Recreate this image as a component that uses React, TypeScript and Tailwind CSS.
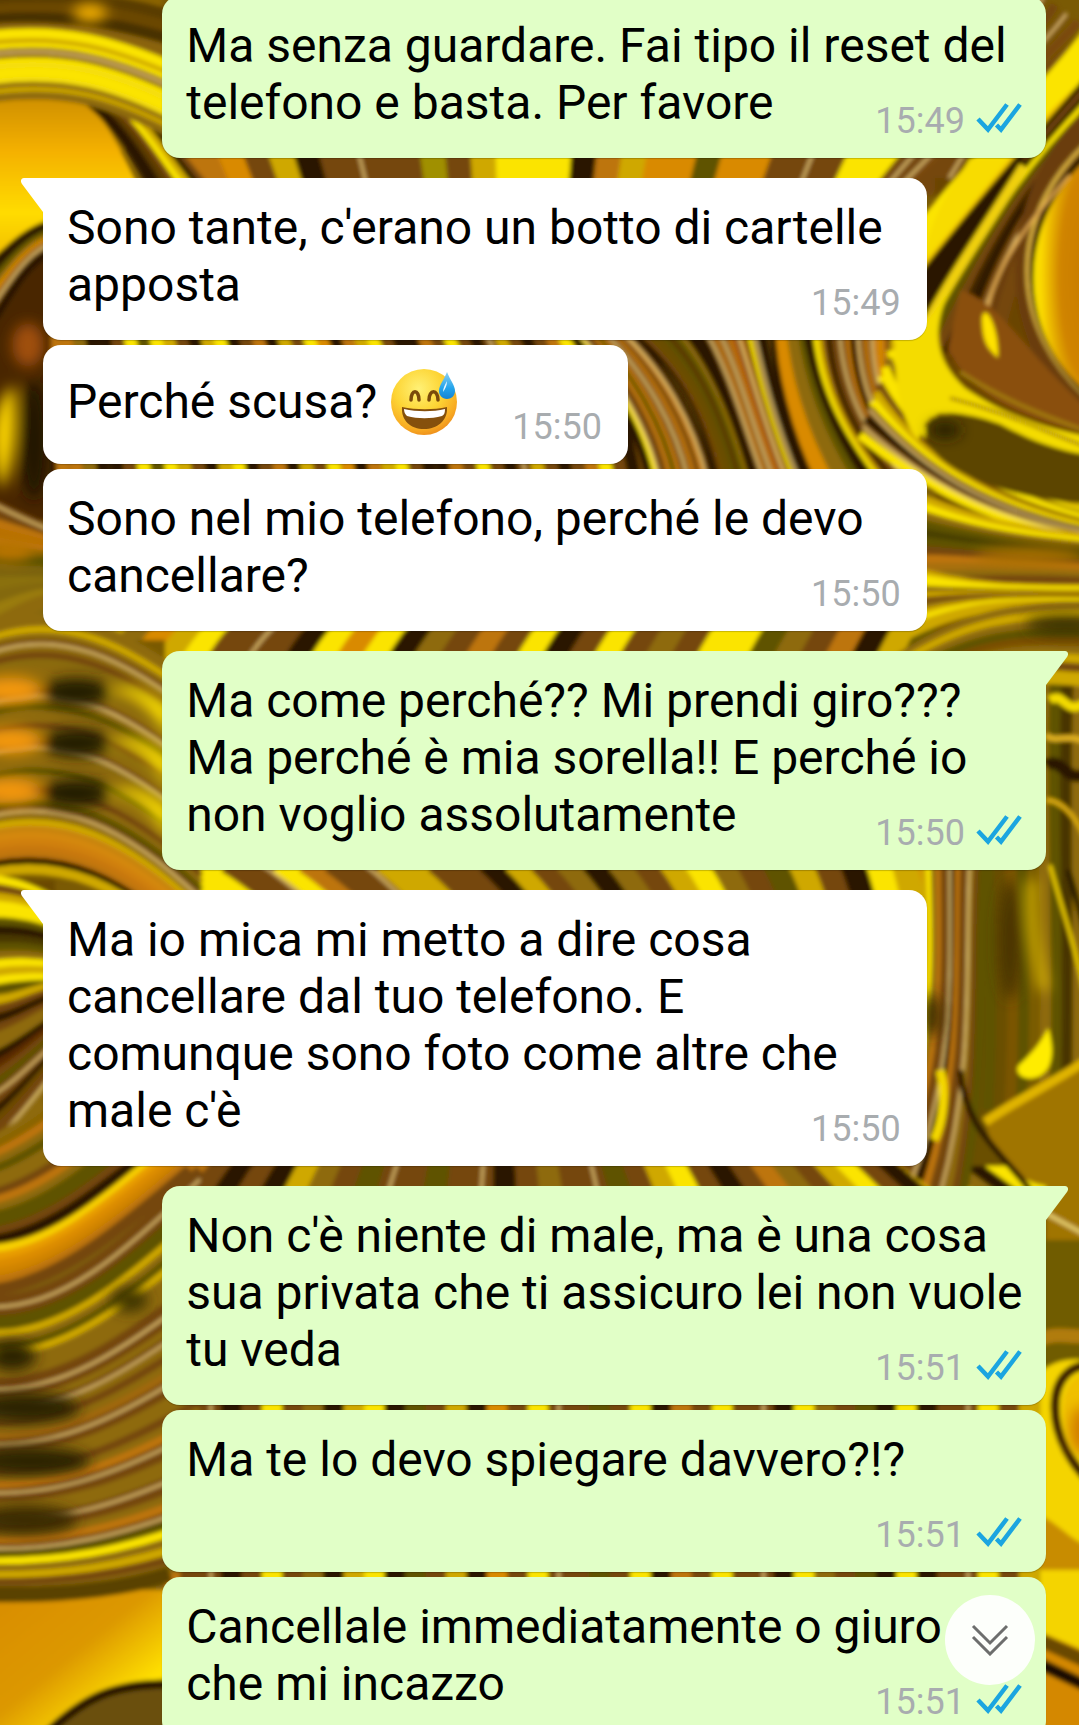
import { useId } from 'react';
import clsx from 'clsx';

type Message = {
  text: string;
  time: string;
  emoji?: boolean;
  timeBelow?: boolean;
};

type Group = {
  from: 'me' | 'them';
  tail: boolean;
  messages: Message[];
};

const groups: Group[] = [
  {
    from: 'me',
    tail: false,
    messages: [{ text: 'Ma senza guardare. Fai tipo il reset del telefono e basta. Per favore', time: '15:49' }],
  },
  {
    from: 'them',
    tail: true,
    messages: [
      { text: "Sono tante, c'erano un botto di cartelle apposta", time: '15:49' },
      { text: 'Perché scusa?', time: '15:50', emoji: true },
      { text: 'Sono nel mio telefono, perché le devo cancellare?', time: '15:50' },
    ],
  },
  {
    from: 'me',
    tail: true,
    messages: [
      { text: 'Ma come perché?? Mi prendi giro??? Ma perché è mia sorella!! E perché io non voglio assolutamente', time: '15:50' },
    ],
  },
  {
    from: 'them',
    tail: true,
    messages: [
      {
        text: "Ma io mica mi metto a dire cosa cancellare dal tuo telefono. E comunque sono foto come altre che male c'è",
        time: '15:50',
      },
    ],
  },
  {
    from: 'me',
    tail: true,
    messages: [
      { text: "Non c'è niente di male, ma è una cosa sua privata che ti assicuro lei non vuole tu veda", time: '15:51' },
      { text: 'Ma te lo devo spiegare davvero?!?', time: '15:51', timeBelow: true },
      { text: 'Cancellale immediatamente o giuro che mi incazzo', time: '15:51' },
    ],
  },
];

/* ---------- Wallpaper ---------- */

// A strand set is a row of cubic curves blended from curve a to curve b
type Strands = { a: number[]; b: number[]; w: number; colors: string[] };

const Y = '#fbe400';
const G = '#cfa800';
const P = '#ecd080';
const A = '#d98a00';
const O = '#bd7408';
const B = '#744608';
const N = '#8e6a08';
const L = '#5e5200';
const D = '#2a1800';

const backdrop: Strands[] = [
  // between the first and second bubble
  {
    a: [150, 140, 158, 155, 166, 170, 176, 190],
    b: [1050, 140, 1038, 155, 1028, 170, 1014, 190],
    w: 28,
    colors: [Y, B, O, A, B, G, D, B, P, B, B, '#a09000', B, G, Y, Y, Y, D, O, G, A, A, L, A, A, B, P, B, Y, Y, Y, B, P, D, Y, D],
  },
  // behind the short bubble gaps
  {
    a: [40, 335, 44, 350, 46, 440, 50, 480],
    b: [640, 335, 660, 370, 680, 430, 690, 480],
    w: 12,
    colors: [D, O, O, N, D, D, B, Y, L, Y, G, B, D, G, Y, D, B, O, D, G, B, Y, A, D, O, G, Y, B, D, D, O, B, Y, B, D, P, G, B, D, B, O, Y, B, D, B, O, B, D],
  },
  {
    a: [60, 615, 40, 630, 20, 650, 10, 670],
    b: [940, 615, 930, 630, 920, 650, 910, 670],
    w: 26,
    colors: [N, N, '#a07808', G, N, A, G, Y, B, P, B, D, Y, A, Y, D, N, B, O, B, Y, D, B, Y, B, N, B, Y, Y, L, N, B, O, D, G, L],
  },
  {
    a: [150, 860, 170, 870, 190, 885, 210, 900],
    b: [1060, 860, 1060, 870, 1060, 885, 1060, 900],
    w: 26,
    colors: [Y, Y, Y, B, P, Y, O, B, P, G, G, B, B, D, G, B, N, D, N, B, G, Y, N, B, L, G, B, D, Y, G, A, G, Y, L, N, L],
  },
  {
    a: [190, 1155, 175, 1170, 165, 1180, 150, 1200],
    b: [1010, 1155, 1030, 1170, 1050, 1180, 1070, 1200],
    w: 22,
    colors: [O, O, B, D, B, D, G, N, B, L, P, B, L, B, P, D, B, N, B, P, L, B, G, Y, B, D, B, O, N, B, G, Y, B, D, G, Y, N, D, Y, Y],
  },
  // thin gaps in the last group
  {
    a: [170, 1390, 170, 1460, 170, 1520, 170, 1600],
    b: [1050, 1390, 1050, 1460, 1050, 1520, 1050, 1600],
    w: 20,
    colors: [O, B, P, D, B, Y, B, N, D, G, Y, D, L, B, G, D, A, B, Y, P, B, L, B, Y, D, O, B, Y, B, P, D, Y, N, B, L, D, Y, D, B, P, Y, B, G, L],
  },
];

const strands: Strands[] = [
  // top left arcs
  { a: [-5, 0, 60, -4, 120, -4, 200, 26], b: [-5, 30, 60, 26, 120, 34, 200, 62], w: 12, colors: ['#5a3c00', '#6a4600', '#4a3000', '#8a6408'] },
  { a: [75, 92, 110, 110, 140, 160, 160, 200], b: [140, 96, 170, 120, 190, 160, 230, 200], w: 9, colors: [D, D, '#5a3a00', B, Y, G, D, B, O] },
  {
    a: [-5, 34, 60, 28, 110, 36, 200, 78],
    b: [-5, 98, 60, 90, 110, 98, 200, 150],
    w: 7,
    colors: [Y, Y, G, Y, P, N, Y, '#f4dc10', Y, Y, '#f4dc10', N, G, N],
  },
  { a: [-5, 262, 12, 246, 28, 230, 50, 224], b: [-5, 318, 12, 290, 28, 262, 50, 252], w: 7, colors: [D, D, L, N, A, P, B, D] },
  { a: [-5, 505, 15, 515, 30, 522, 50, 530], b: [-5, 560, 15, 560, 30, 560, 50, 562], w: 9, colors: [P, B, O, '#b87000', O, '#8a6400', L] },
  { a: [-5, 570, 20, 574, 35, 576, 60, 580], b: [-5, 625, 20, 612, 35, 602, 60, 600], w: 14, colors: ['#7c6408', '#8a7008', '#84690a', '#9a7c08', N] },
  {
    a: [-5, 626, 60, 604, 120, 628, 200, 690],
    b: [-5, 872, 60, 860, 120, 880, 200, 960],
    w: 9,
    colors: [N, N, G, N, P, N, B, '#8a6a08', N, N, '#8a6a08', N, P, N, L, N, N, B, '#8a6a08', N, P, '#8a6a08', N, N, L, N, N, B, N, L, P, N, G, '#c88410', '#d48808', '#d08008', '#c87808', O, D, G],
  },
  { a: [-5, 880, 20, 884, 35, 890, 60, 905], b: [-5, 990, 20, 985, 35, 985, 60, 985], w: 9, colors: [Y, B, G, Y, Y, L, D, '#4a3800', L, N, Y, G, Y, L] },
  {
    a: [-5, 1000, 15, 1000, 30, 990, 60, 985],
    b: [-5, 1150, 15, 1130, 30, 1110, 60, 1070],
    w: 9,
    colors: [G, B, D, B, N, N, D, '#5a2c00', B, L, P, B, D, '#6a4a00', B, P, N],
  },
  {
    a: [-5, 1140, 30, 1120, 60, 1100, 120, 1040],
    b: [-5, 1240, 60, 1230, 110, 1180, 190, 1120],
    w: 10,
    colors: [N, '#8a6400', O, N, L, N, N, B, O, N, L, L, B, D],
  },
  {
    a: [-5, 1250, 60, 1245, 110, 1195, 190, 1130],
    b: [-5, 1290, 60, 1280, 120, 1230, 190, 1170],
    w: 11,
    colors: ['#f8d000', '#e89c00', '#dc8c00', '#d08400', O, B],
  },
  {
    a: [-5, 1300, 60, 1300, 120, 1250, 200, 1170],
    b: [-5, 1590, 60, 1590, 120, 1585, 200, 1560],
    w: 9,
    colors: [B, P, B, L, L, G, N, L, G, N, N, N, B, P, B, N, P, N, B, N, '#a06808', P, B, N, N, B, N, O, P, B, N, N, P, B, N, O, P, L, Y, N, G, B, N],
  },
  // diagonal folds on the right of the short bubble
  {
    a: [612, 320, 670, 365, 700, 430, 712, 480],
    b: [560, 320, 610, 380, 640, 430, 650, 480],
    w: 7,
    colors: [D, P, O, B, O, P, B, O, L, O, B, P, Y, D],
  },
  { a: [628, 325, 690, 370, 710, 430, 722, 480], b: [690, 325, 725, 370, 745, 430, 760, 480], w: 10, colors: [D, B, '#6a5000', '#6a4c00', L, '#5a3400', L, N, D, D] },
  {
    a: [702, 325, 730, 370, 745, 430, 764, 480],
    b: [762, 325, 768, 370, 780, 420, 806, 480],
    w: 6,
    colors: [P, B, O, P, B, O, '#b05a10', P, O, B, Y, P, D, D],
  },
  { a: [776, 325, 776, 370, 790, 430, 812, 480], b: [808, 325, 815, 370, 830, 420, 870, 480], w: 11, colors: [D, A, A, N, N, L, D] },
  {
    a: [816, 325, 820, 390, 850, 440, 890, 490],
    b: [895, 325, 893, 390, 905, 430, 960, 470],
    w: 7,
    colors: [Y, G, B, D, B, P, B, O, D, P, B, O, P, O, A, O, B, G],
  },
  // sweep below the cavity
  {
    a: [900, 325, 905, 410, 960, 470, 1090, 508],
    b: [860, 435, 930, 490, 990, 520, 1090, 540],
    w: 8,
    colors: [Y, Y, G, Y, N, Y, Y, B, G, Y, P, D, P, Y],
  },
  {
    a: [900, 490, 960, 520, 1010, 532, 1090, 540],
    b: [900, 590, 970, 580, 1020, 580, 1090, 584],
    w: 12,
    colors: [G, Y, N, L, '#4a4000', L, B, O, '#a87008', N, B],
  },
  {
    a: [900, 566, 970, 588, 1020, 588, 1090, 588],
    b: [900, 640, 970, 602, 1020, 604, 1090, 606],
    w: 6,
    colors: [G, Y, Y, N, G, B, N, G, Y, G, G],
  },
  // right edge beside the green bubble, down to the lower half
  {
    a: [985, 640, 985, 800, 1000, 960, 990, 1110],
    b: [1096, 640, 1085, 800, 1096, 960, 1090, 1110],
    w: 15,
    colors: [L, '#6a5000', '#7a5400', L, '#7a5c00', N, L, '#4a3400', N, B],
  },
  {
    a: [925, 850, 930, 960, 935, 1060, 880, 1150],
    b: [985, 850, 975, 960, 990, 1060, 960, 1210],
    w: 8,
    colors: [G, Y, N, O, B, P, D, O, B, P, N, B, L],
  },
  { a: [900, 660, 960, 620, 1010, 608, 1090, 608], b: [900, 720, 980, 668, 1030, 675, 1090, 680], w: 13, colors: [N, G, N, L, '#7a5000', N, G, B, G] },
  // upper right folds
  { a: [1020, -20, 1000, 30, 960, 70, 880, 180], b: [1090, 30, 1060, 60, 1020, 90, 880, 220], w: 8, colors: [Y, B, P, B, P, '#7a4a10', B] },
  { a: [1100, 20, 1070, 70, 1020, 110, 890, 270], b: [1100, 80, 1070, 100, 1040, 130, 890, 310], w: 17, colors: [Y, Y, Y, '#f4c400'] },
  {
    a: [1100, 70, 1050, 130, 1000, 180, 900, 310],
    b: [1100, 160, 1050, 190, 1000, 270, 990, 390],
    w: 13,
    colors: [D, B, D, Y, L, B, '#3a2200', D, P, B, '#6a3c08', B],
  },
];

const mix = (a: number[], b: number[], t: number) => a.map((v, i) => Math.round((v + (b[i] - v) * t) * 10) / 10);

function StrandSet({ a, b, w, colors }: Strands) {
  const lines = colors.map((color, i) => {
    const [x0, y0, ...rest] = mix(a, b, i / (colors.length - 1));
    return { color, d: `M${x0} ${y0}C${rest.join(' ')}` };
  });
  return (
    <g fill="none">
      {lines.map(({ color, d }, i) => (
        <path key={i} d={d} stroke={color === P ? B : color} strokeWidth={w + 1} />
      ))}
      {lines
        .filter(({ color }) => color === P)
        .map(({ d }, i) => (
          <path key={i} d={d} stroke={P} strokeWidth="3" strokeOpacity="0.8" />
        ))}
    </g>
  );
}

function Wallpaper() {
  return (
    <svg
      aria-hidden="true"
      viewBox="0 0 1079 1725"
      preserveAspectRatio="xMidYMin slice"
      className="absolute inset-0 h-full w-full"
    >
      <defs>
        <filter id="soft" x="-5%" y="-5%" width="110%" height="110%">
          <feGaussianBlur stdDeviation="2" />
        </filter>
        <filter id="glow" x="-50%" y="-50%" width="200%" height="200%">
          <feGaussianBlur stdDeviation="7" />
        </filter>
        <linearGradient id="amber" x1="0" y1="0" x2="0" y2="1">
          <stop offset="0" stopColor="#c88a00" />
          <stop offset="0.35" stopColor="#f4b000" />
          <stop offset="0.7" stopColor="#ffdc00" />
          <stop offset="1" stopColor="#f0b800" />
        </linearGradient>
        <radialGradient id="pool" cx="0.8" cy="0.5" r="0.8">
          <stop offset="0" stopColor="#c87c00" />
          <stop offset="0.5" stopColor="#d08400" />
          <stop offset="0.85" stopColor="#fbd800" />
          <stop offset="1" stopColor="#f8e400" />
        </radialGradient>
        <linearGradient id="floor" x1="0" y1="0" x2="1" y2="1">
          <stop offset="0" stopColor="#d88c00" />
          <stop offset="0.45" stopColor="#dc9800" />
          <stop offset="0.75" stopColor="#ffe000" />
          <stop offset="1" stopColor="#e0a400" />
        </linearGradient>
      </defs>

      <rect width="1079" height="1725" fill="#7a5a04" />
      <g filter="url(#soft)">
        {backdrop.map((s, i) => (
          <StrandSet key={i} {...s} />
        ))}
        <rect x="-15" y="-15" width="177" height="165" fill="#8a6400" />
        <rect x="-15" y="260" width="66" height="260" fill="#4a2800" />
        <rect x="-15" y="560" width="70" height="80" fill="#7c6408" />
        <rect x="-15" y="640" width="180" height="240" fill="#7a5a06" />
        <rect x="-15" y="880" width="70" height="290" fill="#6a4a04" />
        <path d="M-15 1140H60V1170H165V1620H-15Z" fill="#80600a" />
        <path d="M927 890H1095V1400H1046V1166H927Z" fill="#6a5004" />
        <path d="M935 178H1095V900H1040V631H935Z" fill="#6a4404" />
        <path d="M-15 90L72 88C105 110 128 165 150 210L50 224C25 234 10 250 -15 266Z" fill="url(#amber)" />
        {strands.map((s, i) => (
          <StrandSet key={i} {...s} />
        ))}

        {/* rings round the amber pool */}
        <g fill="none">
          <path d="M1100 120C1020 190 1000 330 1100 410" stroke="#6a3c08" strokeWidth="34" />
          <path d="M1100 132C1006 205 1000 330 1100 408" stroke="#d8b040" strokeWidth="4" />
          <path d="M1100 145C1016 215 1010 330 1100 402" stroke="#241500" strokeWidth="10" />
          <path d="M1070 175C1025 225 975 290 988 345" stroke="#e0a850" strokeWidth="3" />
        </g>
        <path d="M1100 148C1010 215 1012 345 1100 402Z" fill="url(#pool)" />
        <path d="M925 262L1010 158H970C950 190 928 220 925 262Z" fill="#f8dc00" />
        <path d="M920 296C960 240 990 200 1022 158" fill="none" stroke="#2a1800" strokeWidth="12" />
        <path d="M915 350C935 300 985 230 1024 166" fill="none" stroke="#f0d010" strokeWidth="10" />

        {/* yellow junction and cavity */}
        <path d="M895 335C920 340 935 310 952 285C930 330 935 360 965 388C1000 412 1040 428 1095 438V462C1030 455 985 425 945 414C925 412 925 430 918 440C900 420 893 380 895 335Z" fill="#f4dc00" />
        <path d="M926 425C935 408 965 412 1000 424C1030 440 1060 452 1095 456V505C1020 500 945 478 926 440Z" fill="#5c4400" />
        <path d="M960 290C1000 300 1030 360 1095 415V435C1030 420 975 400 948 350Z" fill="#8a5008" />
        <path d="M982 318C985 300 1000 330 998 358C990 350 982 345 982 318Z" fill="#ffe200" />
        <path d="M960 372C1000 398 1040 415 1095 434M950 398C1005 412 1040 430 1095 450" fill="none" stroke="#a88410" strokeWidth="3" />

        {/* glints beside the green bubble */}
        <g fill="none">
          <path d="M1050 700C1066 690 1064 720 1090 700" stroke="#f4dc00" strokeWidth="9" />
          <path d="M1046 735C1056 745 1070 730 1090 745" stroke="#e0b020" strokeWidth="6" />
          <path d="M1046 765C1062 755 1070 790 1090 770" stroke="#2a1800" strokeWidth="12" />
          <path d="M1046 800C1060 800 1078 815 1090 850" stroke="#d8a810" strokeWidth="5" />
          <path d="M1050 865C1062 910 1074 940 1084 990" stroke="#e8c800" strokeWidth="4" />
          <path d="M1068 870C1080 910 1086 930 1090 960" stroke="#2a1c00" strokeWidth="6" />
        </g>

        {/* lower right shapes */}
        <path d="M1048 1028C1054 1045 1055 1068 1040 1076C1028 1082 1014 1076 1018 1066C1028 1056 1038 1048 1048 1028Z" fill="#ffec00" />
        <path d="M985 1118L1095 1055V1300H1046V1186C1010 1180 990 1150 985 1118Z" fill="#a07404" />
        <path d="M985 1122C1020 1098 1050 1085 1095 1055" fill="none" stroke="#e0b400" strokeWidth="9" />
        <path d="M960 1070C965 1130 1000 1150 1030 1190" fill="none" stroke="#2a1600" strokeWidth="6" />
        <path d="M934 1140C944 1120 946 1090 940 1070" fill="none" stroke="#f4d800" strokeWidth="9" />
        <path d="M1040 1210L1095 1240" stroke="#e8d070" strokeWidth="4" />
        <rect x="1040" y="1240" width="55" height="140" fill="#705c04" />
        <path d="M1040 1340C1055 1330 1080 1340 1095 1335" fill="none" stroke="#b07c08" strokeWidth="14" />
        <path d="M1040 1372C1060 1356 1080 1358 1095 1362V1740H1040Z" fill="#f4d400" />
        <path d="M1100 1366C1040 1355 1040 1445 1100 1490" fill="none" stroke="#3a1c00" strokeWidth="9" />
        <path d="M1100 1376C1052 1362 1050 1438 1100 1478Z" fill="#f0c000" />
        <path d="M1040 1515C1060 1525 1070 1540 1095 1550V1570H1040Z" fill="#c88c00" />
        <path d="M1040 1632L1095 1655V1740H1040Z" fill="#d48800" />
        <path d="M1040 1640L1095 1665" stroke="#6a4a00" strokeWidth="14" />
        <path d="M1040 1664L1095 1690" stroke="#1c0e00" strokeWidth="12" />

        <path d="M-15 1590H170V1740H-15Z" fill="url(#floor)" />
        <path d="M40 1740C80 1700 110 1685 170 1684V1740Z" fill="#6a5008" />
        <path d="M40 1740C85 1695 115 1684 170 1684" fill="none" stroke="#2a1800" strokeWidth="9" />
        <path d="M-15 1594C60 1596 120 1590 170 1574" fill="none" stroke="#5a4200" strokeWidth="16" />
      </g>

      <g filter="url(#glow)">
        <ellipse cx="90" cy="13" rx="17" ry="9" fill="#f8b400" />
        <ellipse cx="28" cy="345" rx="16" ry="22" fill="#a05008" />
        <path d="M14 385C-6 400 -14 440 2 490C16 460 16 420 14 385Z" fill="#ffd800" />
        <ellipse cx="34" cy="440" rx="14" ry="60" fill="#241400" />
        <ellipse cx="10" cy="550" rx="24" ry="12" fill="#b87400" />
        {[690, 741, 791].map((y) => (
          <g key={y}>
            <ellipse cx="10" cy={y} rx="32" ry="13" fill="#f49808" />
            <ellipse cx="76" cy={y + 2} rx="34" ry="14" fill="#241c00" />
            <path d={`M108 ${y}C135 ${y + 4} 150 ${y + 16} 170 ${y + 48}V${y + 18}C150 ${y + 2} 130 ${y - 8} 108 ${y}Z`} fill="#ffe400" />
          </g>
        ))}
        <ellipse cx="12" cy="1356" rx="24" ry="15" fill="#2c2400" />
        <ellipse cx="25" cy="1408" rx="54" ry="15" fill="#2c2200" />
        <ellipse cx="30" cy="1461" rx="60" ry="14" fill="#2c2200" />
        <ellipse cx="25" cy="1520" rx="52" ry="15" fill="#3a2c00" />
        <ellipse cx="130" cy="1300" rx="18" ry="12" fill="#3a3200" />
        <ellipse cx="945" cy="430" rx="16" ry="8" fill="#241a00" />
        <ellipse cx="1030" cy="556" rx="55" ry="9" fill="#a87000" />
        <ellipse cx="1065" cy="625" rx="40" ry="10" fill="#3a3000" />
        <ellipse cx="932" cy="1015" rx="9" ry="22" fill="#3a2c00" />
        <ellipse cx="1082" cy="1430" rx="12" ry="24" fill="#d07c00" />
        <ellipse cx="1010" cy="940" rx="12" ry="60" fill="#4a3600" />
        <path d="M1032 880C1030 930 1038 960 1044 990" stroke="#e8c800" strokeWidth="8" fill="none" />
      </g>
    </svg>
  );
}

/* ---------- Icons ---------- */

function ReadTicks() {
  return (
    <svg viewBox="0 0 46 30" className="h-[30px] w-[46px]" fill="none" stroke="#1ba5e0" strokeWidth="4.5" role="img" aria-label="Letto">
      <path d="M2 16L12 26.5L31 1.5" />
      <path d="M20.5 22L25 26.5L44 1.5" />
    </svg>
  );
}

function SweatSmile() {
  const id = useId();
  return (
    <svg viewBox="0 2 68 68" className="inline-block h-[68px] w-[68px]" role="img" aria-label="😅">
      <defs>
        <radialGradient id={`${id}f`} cx="0.42" cy="0.3" r="0.72">
          <stop offset="0" stopColor="#fff176" />
          <stop offset="0.5" stopColor="#fdd535" />
          <stop offset="0.85" stopColor="#f8ab22" />
          <stop offset="1" stopColor="#ee8f1c" />
        </radialGradient>
        <linearGradient id={`${id}d`} x1="0" y1="0" x2="0" y2="1">
          <stop offset="0" stopColor="#8fd0f0" />
          <stop offset="0.6" stopColor="#22a4ec" />
          <stop offset="1" stopColor="#1583d4" />
        </linearGradient>
      </defs>
      <circle cx="33" cy="36" r="33" fill={`url(#${id}f)`} />
      <path d="M20 34C20 23 28 23 28 34M38 34C38 23 47 23 47 34" fill="none" stroke="#7a4a0a" strokeWidth="3.5" strokeLinecap="round" />
      <path d="M11 41C25 44 43 44 56 41C57 55 46 63 33 63C20 63 10 55 11 41Z" fill="#85500c" />
      <path d="M13 43C26 46 42 46 54 43C54 47 53 49 51 50C40 53 27 53 16 50C14 48 13 46 13 43Z" fill="#fff" />
      <path d="M56 6C59 14 64 19 64 25C64 30 60 33 56 33C51 33 48 29 48 25C48 19 53 14 56 6Z" fill={`url(#${id}d)`} />
      <path d="M56 15C54 19 52 22 52 26C54 23 56 20 56 15Z" fill="#e4f6ff" />
    </svg>
  );
}

function Tail({ mine }: { mine: boolean }) {
  return (
    <svg
      aria-hidden="true"
      viewBox="0 0 22 34"
      className={clsx('absolute top-0 h-[34px] w-[22px]', mine ? 'left-full -scale-x-100' : 'right-full')}
    >
      <path d="M22 0H3C0 0 -1 3 1 6L22 34Z" fill={mine ? '#e1ffc7' : '#ffffff'} />
    </svg>
  );
}

/* ---------- Chat ---------- */

function Bubble({ message, mine, tail }: { message: Message; mine: boolean; tail: boolean }) {
  const { text, time, emoji, timeBelow } = message;
  return (
    <li
      className={clsx(
        'relative flex flex-col rounded-[18px] pt-[21px] pr-[22px] pb-[19px] pl-6 shadow-[0_1px_1px_rgba(0,0,0,0.2)]',
        mine ? 'mr-[33px] self-end bg-[#e1ffc7]' : 'ml-[43px] self-start bg-white',
        emoji ? 'min-w-[585px]' : 'w-[calc(82%-1px)]',
        tail && (mine ? 'rounded-tr-none' : 'rounded-tl-none'),
      )}
    >
      {tail && <Tail mine={mine} />}
      <p className={clsx('text-[48px] text-black', emoji ? 'flex items-center gap-[14px] leading-[71px]' : 'leading-[57px]')}>
        {text}
        {emoji && <SweatSmile />}
      </p>
      <div className={clsx('flex items-start gap-[11px] self-end', timeBelow ? 'mt-[29px]' : '-mt-7', mine ? 'pr-[2px]' : 'pr-1')}>
        <time className="text-[36px] leading-9 text-[#a8acaf]">{time}</time>
        {mine && <ReadTicks />}
      </div>
    </li>
  );
}

export default function App() {
  return (
    <main className="relative h-screen overflow-hidden font-[Roboto,sans-serif]">
      <Wallpaper />

      <div className="relative -mt-1 flex flex-col gap-5">
        {groups.map((group, g) => (
          <ul key={g} className="flex flex-col gap-[5px]">
            {group.messages.map((message, i) => (
              <Bubble key={i} message={message} mine={group.from === 'me'} tail={group.tail && i === 0} />
            ))}
          </ul>
        ))}
      </div>

      {/* Jump to latest */}
      <button
        type="button"
        aria-label="Vai in fondo"
        className="absolute right-[44px] bottom-[40px] flex size-[90px] items-center justify-center rounded-full bg-[#fdfffb]"
      >
        <svg viewBox="0 0 38 32" className="h-8 w-[38px]" fill="none" stroke="#6d6e6d" strokeWidth="3">
          <path d="M2 2L19 19L36 2M2 13L19 30L36 13" />
        </svg>
      </button>
    </main>
  );
}
